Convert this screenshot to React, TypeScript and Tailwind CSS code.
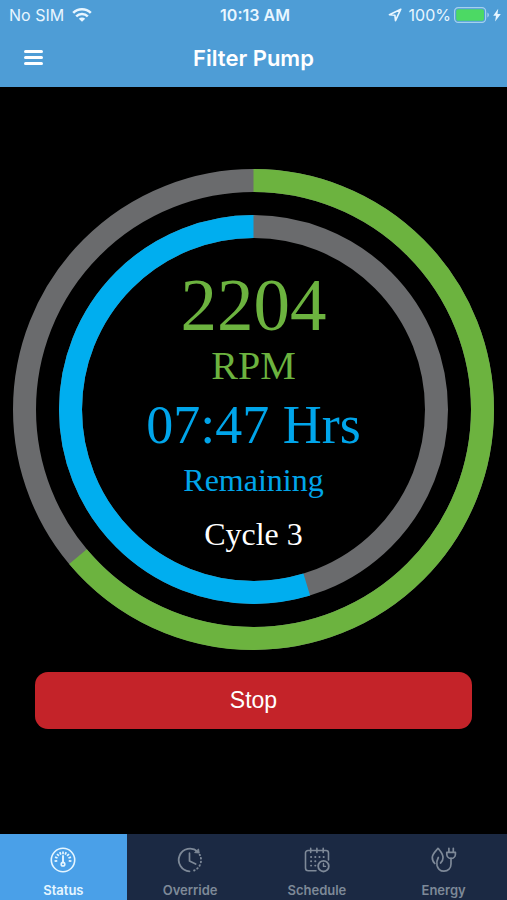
import { useState } from "react";
import type { ReactNode } from "react";

type RingProps = { radius: number; value: number; reverse?: boolean; color: string };

const DIAL = 481;
const CENTER = DIAL / 2;
const STROKE = 23;

function Ring({ radius, value, reverse = false, color }: RingProps) {
  const flip = reverse ? ` translate(0 ${DIAL}) scale(1 -1)` : "";
  return (
    <g fill="none" strokeWidth={STROKE} transform={`rotate(-90 ${CENTER} ${CENTER})${flip}`}>
      <circle cx={CENTER} cy={CENTER} r={radius} stroke="#6a6b6d" />
      <circle
        cx={CENTER}
        cy={CENTER}
        r={radius}
        stroke={color}
        pathLength={100}
        strokeDasharray={`${value} ${100 - value}`}
      />
    </g>
  );
}

function WifiIcon() {
  return (
    <svg viewBox="0 0 20 14" className="h-[14px] w-5" fill="none" stroke="currentColor" aria-hidden="true">
      <path d="M1.2 4.9a12.6 12.6 0 0 1 17.6 0" strokeWidth="2.6" />
      <path d="M4.2 8.3a8.2 8.2 0 0 1 11.6 0" strokeWidth="2.5" />
      <path d="M10 13.8 6.8 10.7a4.6 4.6 0 0 1 6.4 0Z" fill="currentColor" stroke="none" />
    </svg>
  );
}

function LocationIcon() {
  return (
    <svg viewBox="0 0 14 14" className="size-[14px]" fill="none" stroke="currentColor" strokeWidth="1.6" strokeLinejoin="round" aria-hidden="true">
      <path d="M12.8 1.2 1.4 6.7l5.5.5.6 5.5Z" />
    </svg>
  );
}

function BatteryIcon() {
  return (
    <svg viewBox="0 0 36 16" className="h-4 w-9" aria-hidden="true">
      <rect x="0.6" y="0.6" width="31" height="14.8" rx="3.6" fill="none" stroke="#a5d0ee" strokeWidth="1.2" />
      <rect x="2.2" y="2.2" width="27.8" height="11.6" rx="2" fill="#4cd964" />
      <path d="M33.4 5.6c2 .8 2 4 0 4.8Z" fill="#a5d0ee" />
    </svg>
  );
}

function BoltIcon() {
  return (
    <svg viewBox="0 0 8 14" className="h-[14px] w-2" fill="currentColor" aria-hidden="true">
      <path d="M5.2.8.2 7.8H3l-.9 5.6L7.8 6H4.5Z" />
    </svg>
  );
}

function TabSvg({ children }: { children: ReactNode }) {
  return (
    <svg viewBox="0 0 26 26" className="size-[26px]" fill="none" stroke="currentColor" strokeWidth="1.5" strokeLinecap="round" strokeLinejoin="round" aria-hidden="true">
      {children}
    </svg>
  );
}

function GaugeIcon() {
  return (
    <TabSvg>
      <circle cx="13" cy="13" r="11.7" strokeWidth="1.6" />
      <path d="M13 9v6.5" strokeWidth="1.9" />
      <circle cx="13" cy="17.2" r="1.8" strokeWidth="1.6" />
      <g strokeWidth="1.7" strokeLinecap="butt">
        {[-98, -70, -45, -22, 0, 22, 45, 70, 98].map((angle) => (
          <path key={angle} d="M13 4.5v2.7" transform={`rotate(${angle} 13 13)`} />
        ))}
      </g>
    </TabSvg>
  );
}

function OverrideIcon() {
  return (
    <TabSvg>
      <path d="M12.5 24.3A11.3 11.3 0 1 1 20.7 4.7" strokeWidth="1.8" />
      <path d="m18 5.6 4.2.4-.6-3.6Z" fill="currentColor" strokeWidth="1" />
      <path d="M22.7 7.7a11.3 11.3 0 0 1-8 16.5" strokeWidth="1.9" strokeDasharray="0.6 3" />
      <path d="M12.500 6.200V14l6.200 3" strokeWidth="1.700" />
    </TabSvg>
  );
}

function ScheduleIcon() {
  return (
    <TabSvg>
      <path d="M12 23.8H4.3A2.8 2.8 0 0 1 1.500 21V6A2.500 2.500 0 0 1 4 3.500h18A2.500 2.500 0 0 1 24.500 6v7" strokeWidth="1.6" />
      <path d="M6.700 1.400v4M12.900 1.400v4M19.200 1.400v4" strokeWidth="1.6" />
      <circle cx="19.500" cy="19.200" r="5.300" strokeWidth="1.800" />
      <path d="M19.500 16.400v3h2" strokeWidth="1.400" />
      <path d="M7 10h.2M11.200 10h.2M15.400 10h.2M19.600 10h.2M7 14.300h.2M11.200 14.300h.2M7 18.600h.2M11.200 18.600h.2" strokeWidth="1.900" />
    </TabSvg>
  );
}

function EnergyIcon() {
  return (
    <TabSvg>
      <path d="M3.8 16.500C2 14.800 1.200 12.700 1.300 10.300 1.500 6.500 4.700 4.300 7 1.300c2.600 3.200 5 5.200 5 9.400 0 2.200-.8 4-2.400 5.300" strokeWidth="1.700" />
      <path d="M7.300 10.500C5.800 13.300 5.600 16 6 18.200c.8 3.700 3.400 5.900 6.900 5.900 4.200 0 7.100-2.900 7.100-7V11" strokeWidth="1.700" />
      <path d="M15.800 5.300h8.600v1.900a4.300 4.300 0 0 1-8.600 0ZM17.900 1.300v3.700M22.300 1.300v3.700" strokeWidth="1.700" />
    </TabSvg>
  );
}

const tabs = [
  { name: "Status", Icon: GaugeIcon },
  { name: "Override", Icon: OverrideIcon },
  { name: "Schedule", Icon: ScheduleIcon },
  { name: "Energy", Icon: EnergyIcon },
];

export default function App() {
  const [active, setActive] = useState("Status");

  return (
    <div className="flex min-h-screen flex-col bg-black font-['Inter',sans-serif]">
      <header className="bg-[#4e9dd6] text-white">
        <div className="grid h-[30px] grid-cols-3 items-center pr-[6px] pl-[9px] text-base leading-5 text-[#e8f6ff]">
          <div className="flex items-center gap-2">
            <span>No SIM</span>
            <WifiIcon />
          </div>
          <span className="text-center font-semibold">10:13 AM</span>
          <div className="flex items-center justify-end gap-[3px]">
            <LocationIcon />
            <span className="pl-1">100%</span>
            <BatteryIcon />
            <BoltIcon />
          </div>
        </div>
        <div className="grid h-[57px] grid-cols-[56px_1fr_56px] items-center pb-[2px]">
          <button type="button" aria-label="Menu" className="flex h-8 flex-col justify-center gap-[3px] pl-6">
            <span className="h-[3px] w-[19px] rounded-sm bg-white" />
            <span className="h-[3px] w-[19px] rounded-sm bg-white" />
            <span className="h-[3px] w-[19px] rounded-sm bg-white" />
          </button>
          <h1 className="text-center text-[22px] leading-7 font-semibold">Filter Pump</h1>
        </div>
      </header>

      <main className="flex-1 pt-[82px]">
        <div className="mx-[13px] grid">
          <svg viewBox={`0 0 ${DIAL} ${DIAL}`} className="col-start-1 row-start-1 w-full" aria-hidden="true">
            <Ring radius={229} value={63.9} color="#6cb33f" />
            <Ring radius={183} value={54.7} reverse color="#00aeef" />
          </svg>
          <div className="col-start-1 row-start-1 flex flex-col items-center self-center pt-1 font-['Liberation_Serif',serif]">
            <p className="text-[73px] leading-[72px] text-[#6cb33f]">2204</p>
            <p className="text-[40px] leading-[48px] text-[#6cb33f]">RPM</p>
            <p className="text-[54px] leading-[70px] text-[#00a5ea]">07:47 Hrs</p>
            <p className="text-[32px] leading-[40px] text-[#00a5ea]">Remaining</p>
            <p className="mt-[14px] text-[32px] leading-[40px] text-white">Cycle 3</p>
          </div>
        </div>
        <div className="px-[35px] pt-[22px]">
          <button type="button" className="h-[57px] w-full rounded-[13px] bg-[#c42329] pb-px font-['Liberation_Sans',sans-serif] text-[23px] text-white">
            Stop
          </button>
        </div>
      </main>

      <nav className="grid h-[66px] grid-cols-4 bg-[#1b2943]">
        {tabs.map(({ name, Icon }) => (
          <button
            key={name}
            type="button"
            aria-current={active === name ? "page" : undefined}
            onClick={() => setActive(name)}
            className={`flex flex-col items-center gap-[9px] pt-[13px] text-[13px] leading-4 font-semibold ${
              active === name ? "bg-[#4aa0e8] text-[#e6f6ff]" : "text-[#7e8998]"
            }`}
          >
            <Icon />
            <span>{name}</span>
          </button>
        ))}
      </nav>
    </div>
  );
}
